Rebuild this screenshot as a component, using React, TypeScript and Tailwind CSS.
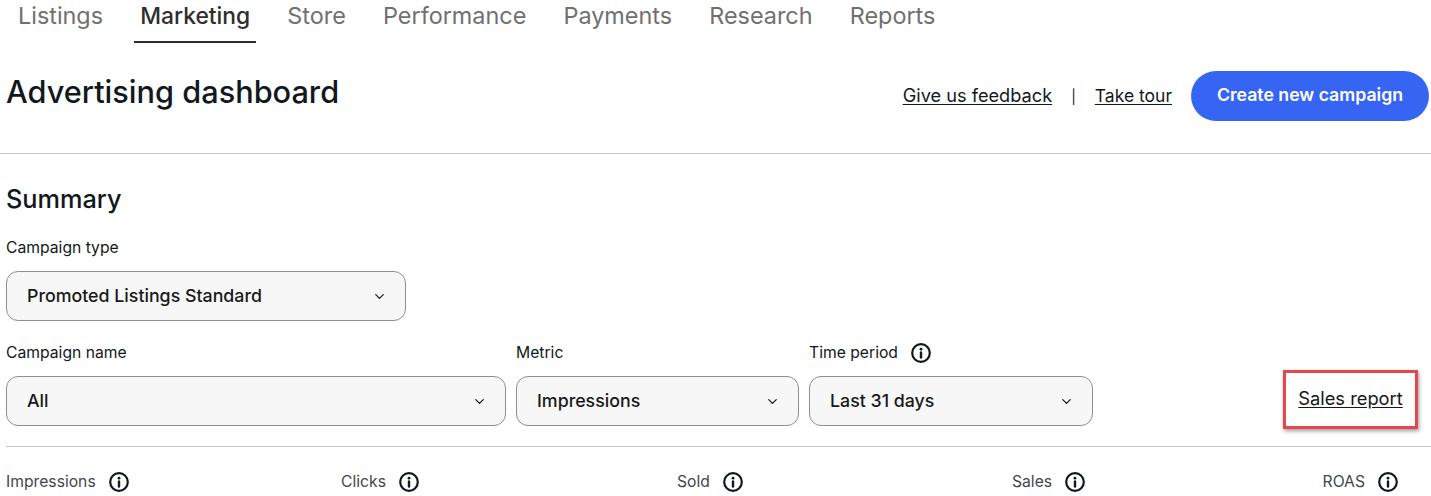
import { ChevronDown } from 'lucide-react'

const tabs = ['Listings', 'Marketing', 'Store', 'Performance', 'Payments', 'Research', 'Reports']

function InfoIcon() {
  return (
    <svg width="20" height="20" viewBox="0 0 20 20" fill="none" className="shrink-0">
      <circle cx="10" cy="10" r="8.8" stroke="#111820" strokeWidth="2.2" />
      <circle cx="10" cy="6.2" r="1.4" fill="#111820" />
      <path d="M10 9.4v5.2" stroke="#111820" strokeWidth="2.4" strokeLinecap="round" />
    </svg>
  )
}

function Select({ value, className }: { value: string; className: string }) {
  return (
    <div className={`flex h-[50px] items-center justify-between rounded-xl border border-[#8f8f8f] bg-[#f7f7f7] pl-5 pr-[18px] text-[17.8px] font-medium text-[#191919] ${className}`}>
      <span>{value}</span>
      <ChevronDown size={15} strokeWidth={2} className="text-[#191919]" />
    </div>
  )
}

function Metric({ label, className = '' }: { label: string; className?: string }) {
  return (
    <div className={`flex items-center gap-[13px] text-[15.7px] text-[#41474d] ${className}`}>
      <span>{label}</span>
      <InfoIcon />
    </div>
  )
}

export default function App() {
  return (
    <div className="h-[496px] w-[1431px] overflow-hidden bg-white font-['Inter',sans-serif] text-[#111820]">
      {/* Tabs */}
      <div className="flex h-[43px] gap-[25.2px] pl-[12px]">
        {tabs.map((tab) => (
          <div
            key={tab}
            className={`h-[43px] px-[6px] leading-[32px] ${tab === 'Marketing' ? 'border-b-2 border-[#2e2e2e] text-[22.8px] font-medium text-[#2e2e2e]' : 'text-[23.4px] text-[#707070]'}`}
          >
            {tab}
          </div>
        ))}
      </div>

      {/* Page header */}
      <div className="flex h-[111px] items-start justify-between border-b border-[#c7c7c7] pl-[6px] pr-[2px]">
        <h1 className="mt-[28px] text-[30.7px] font-medium leading-[42px] text-[#111820]">Advertising dashboard</h1>
        <div className="mt-[28px] flex items-center text-[18.2px]">
          <a className="mb-[1px] underline underline-offset-2">Give us feedback</a>
          <span className="mx-[19px] text-[14px]">|</span>
          <a className="text-[17.5px] underline underline-offset-2">Take tour</a>
          <button className="ml-[19px] h-[50px] w-[238px] rounded-full bg-[#3665f3] pb-[2px] text-[17.7px] font-semibold text-white">
            Create new campaign
          </button>
        </div>
      </div>

      {/* Summary filters */}
      <div className="pl-[6px]">
        <h2 className="mt-[28px] text-[25.3px] font-medium leading-[34px]">Summary</h2>
        <div className="mt-[22px] text-[15.7px] leading-5">Campaign type</div>
        <Select value="Promoted Listings Standard" className="mt-[13px] w-[400px]" />

        <div className="mt-[21px] flex items-start">
          <div className="w-[500px]">
            <div className="flex h-[21px] items-center text-[15.7px]">Campaign name</div>
            <Select value="All" className="mt-[13px] w-[500px]" />
          </div>
          <div className="ml-[10px] w-[283px]">
            <div className="flex h-[21px] items-center text-[15.7px]">Metric</div>
            <Select value="Impressions" className="mt-[13px] w-[283px]" />
          </div>
          <div className="ml-[10px] w-[284px]">
            <div className="flex h-[21px] items-center gap-[13px] text-[15.7px]">
              Time period
              <InfoIcon />
            </div>
            <Select value="Last 31 days" className="mt-[13px] w-[284px]" />
          </div>
          <div className="ml-[190px] mt-[28px] flex h-[59px] w-[135px] items-center justify-center border-[3px] border-[#e5474f] text-[18.3px] shadow-[1px_2px_4px_rgba(0,0,0,0.4)]">
            <a className="mb-[2px] underline underline-offset-2">Sales report</a>
          </div>
        </div>

        <div className="mt-[17px] border-t border-[#c7c7c7]" />

        {/* Metrics */}
        <div className="mt-[23px] flex pr-[33px]">
          <Metric label="Impressions" className="w-[335px]" />
          <Metric label="Clicks" className="w-[336px]" />
          <Metric label="Sold" className="w-[335px]" />
          <Metric label="Sales" />
          <Metric label="ROAS" className="ml-auto" />
        </div>
      </div>
    </div>
  )
}
